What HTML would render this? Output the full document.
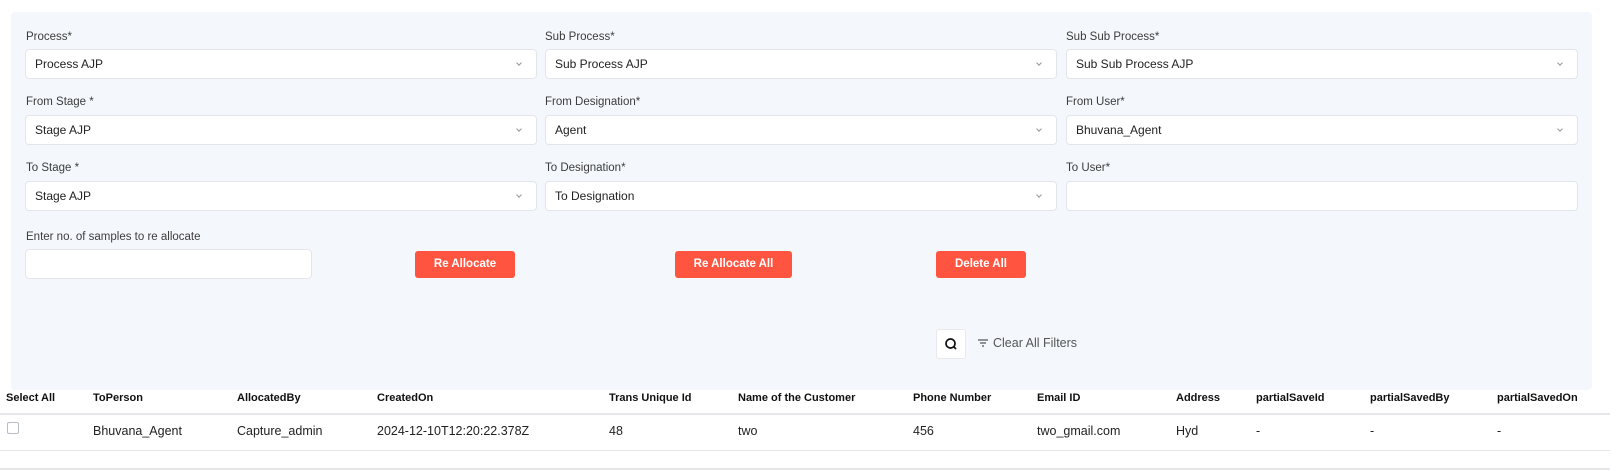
<!DOCTYPE html>
<html><head><style>
*{box-sizing:border-box;margin:0;padding:0}
body{width:1616px;height:471px;background:#fff;font-family:"Liberation Sans",Arial,sans-serif;position:relative;overflow:hidden;color:#222}
.panel{position:absolute;left:11px;top:12px;width:1581px;height:378px;background:#f4f7fb;border-radius:4px}
.lbl{position:absolute;font-size:11.5px;color:#3c3c3c}
.inp{position:absolute;height:30px;background:#fff;border:1px solid #e2e6ec;border-radius:4px;font-size:12px;line-height:28px;padding-left:9px;color:#222}
.inp.sel::after{content:"";position:absolute;right:15px;top:11px;width:3px;height:3px;border-right:1px solid #999;border-bottom:1px solid #999;transform:rotate(45deg)}
.btn{position:absolute;top:251px;height:27px;background:#ff5540;color:#fff;font-weight:bold;font-size:11.5px;border-radius:3px;text-align:center;line-height:27px}
.th{position:absolute;top:392px;font-size:11px;font-weight:bold;color:#111}
.td{position:absolute;top:424px;font-size:12.5px;color:#222}
.line{position:absolute;left:0;width:1610px;height:2px;background:#e4e6ea}
</style></head><body>
<div class="panel"></div>
<div class="lbl" style="left:26px;top:31px">Process*</div>
<div class="lbl" style="left:545px;top:31px">Sub Process*</div>
<div class="lbl" style="left:1066px;top:31px">Sub Sub Process*</div>
<div class="inp sel" style="left:25px;top:49px;width:512px">Process AJP</div>
<div class="inp sel" style="left:545px;top:49px;width:512px">Sub Process AJP</div>
<div class="inp sel" style="left:1066px;top:49px;width:512px">Sub Sub Process AJP</div>
<div class="lbl" style="left:26px;top:96px">From Stage *</div>
<div class="lbl" style="left:545px;top:96px">From Designation*</div>
<div class="lbl" style="left:1066px;top:96px">From User*</div>
<div class="inp sel" style="left:25px;top:115px;width:512px">Stage AJP</div>
<div class="inp sel" style="left:545px;top:115px;width:512px">Agent</div>
<div class="inp sel" style="left:1066px;top:115px;width:512px">Bhuvana_Agent</div>
<div class="lbl" style="left:26px;top:162px">To Stage *</div>
<div class="lbl" style="left:545px;top:162px">To Designation*</div>
<div class="lbl" style="left:1066px;top:162px">To User*</div>
<div class="inp sel" style="left:25px;top:181px;width:512px">Stage AJP</div>
<div class="inp sel" style="left:545px;top:181px;width:512px">To Designation</div>
<div class="inp" style="left:1066px;top:181px;width:512px"></div>
<div class="lbl" style="left:26px;top:231px">Enter no. of samples to re allocate</div>
<div class="inp" style="left:25px;top:249px;width:287px"></div>
<div class="btn" style="left:415px;width:100px">Re Allocate</div>
<div class="btn" style="left:675px;width:117px">Re Allocate All</div>
<div class="btn" style="left:936px;width:90px">Delete All</div>
<div style="position:absolute;left:936px;top:329px;width:30px;height:30px;background:#fff;border:1px solid #e6e9ee;border-radius:3px">
<svg width="28" height="28" viewBox="0 0 28 28"><circle cx="13.5" cy="13.5" r="4.5" fill="none" stroke="#111" stroke-width="1.7"/><path d="M16.5 16.5L19 19" stroke="#111" stroke-width="1.7"/></svg></div>
<svg style="position:absolute;left:978px;top:339px" width="10" height="8"><path d="M0 1H10M2 4H8M4 7H6" stroke="#555" stroke-width="1.2"/></svg>
<div style="position:absolute;left:993px;top:336px;font-size:12.5px;color:#555">Clear All Filters</div>
<div class="th" style="left:6px">Select All</div>
<div class="th" style="left:93px">ToPerson</div>
<div class="th" style="left:237px">AllocatedBy</div>
<div class="th" style="left:377px">CreatedOn</div>
<div class="th" style="left:609px">Trans Unique Id</div>
<div class="th" style="left:738px">Name of the Customer</div>
<div class="th" style="left:913px">Phone Number</div>
<div class="th" style="left:1037px">Email ID</div>
<div class="th" style="left:1176px">Address</div>
<div class="th" style="left:1256px">partialSaveId</div>
<div class="th" style="left:1370px">partialSavedBy</div>
<div class="th" style="left:1497px">partialSavedOn</div>
<div class="line" style="top:413px"></div>
<div style="position:absolute;left:7px;top:422px;width:12px;height:12px;border:1px solid #b8bcc6;border-radius:2px;background:#fff"></div>
<div class="td" style="left:93px">Bhuvana_Agent</div>
<div class="td" style="left:237px">Capture_admin</div>
<div class="td" style="left:377px">2024-12-10T12:20:22.378Z</div>
<div class="td" style="left:609px">48</div>
<div class="td" style="left:738px">two</div>
<div class="td" style="left:913px">456</div>
<div class="td" style="left:1037px">two_gmail.com</div>
<div class="td" style="left:1176px">Hyd</div>
<div class="td" style="left:1256px">-</div>
<div class="td" style="left:1370px">-</div>
<div class="td" style="left:1497px">-</div>
<div class="line" style="top:450px;height:1px"></div>
<div class="line" style="top:468px"></div>
</body></html>
